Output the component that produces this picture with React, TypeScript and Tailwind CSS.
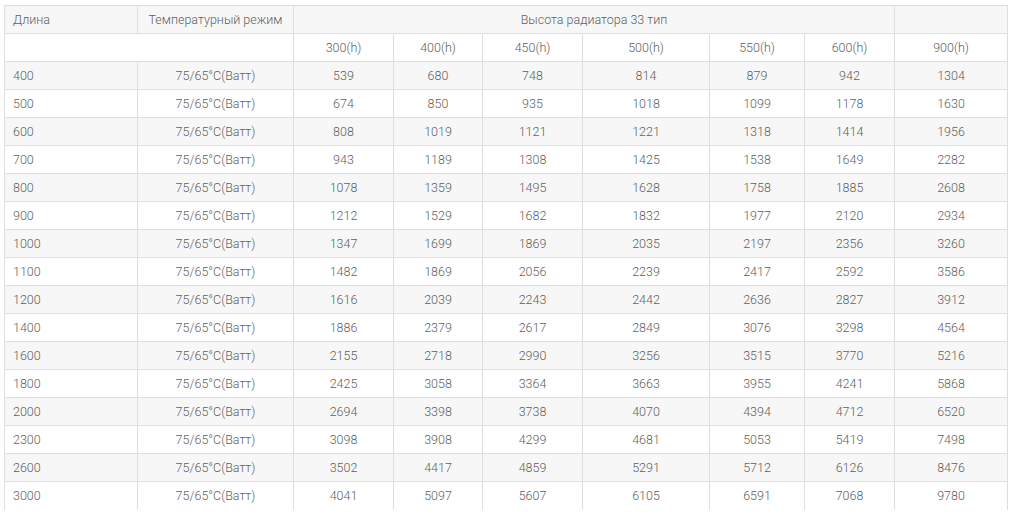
const heights = ["300(h)", "400(h)", "450(h)", "500(h)", "550(h)", "600(h)", "900(h)"];

const rows: [string, number[]][] = [
  ["400", [539, 680, 748, 814, 879, 942, 1304]],
  ["500", [674, 850, 935, 1018, 1099, 1178, 1630]],
  ["600", [808, 1019, 1121, 1221, 1318, 1414, 1956]],
  ["700", [943, 1189, 1308, 1425, 1538, 1649, 2282]],
  ["800", [1078, 1359, 1495, 1628, 1758, 1885, 2608]],
  ["900", [1212, 1529, 1682, 1832, 1977, 2120, 2934]],
  ["1000", [1347, 1699, 1869, 2035, 2197, 2356, 3260]],
  ["1100", [1482, 1869, 2056, 2239, 2417, 2592, 3586]],
  ["1200", [1616, 2039, 2243, 2442, 2636, 2827, 3912]],
  ["1400", [1886, 2379, 2617, 2849, 3076, 3298, 4564]],
  ["1600", [2155, 2718, 2990, 3256, 3515, 3770, 5216]],
  ["1800", [2425, 3058, 3364, 3663, 3955, 4241, 5868]],
  ["2000", [2694, 3398, 3738, 4070, 4394, 4712, 6520]],
  ["2300", [3098, 3908, 4299, 4681, 5053, 5419, 7498]],
  ["2600", [3502, 4417, 4859, 5291, 5712, 6126, 8476]],
  ["3000", [4041, 5097, 5607, 6105, 6591, 7068, 9780]],
];

const cell = "h-[28px] border border-[#dedede] px-2 pt-[2px] pb-0 align-middle whitespace-nowrap";

export default function App() {
  return (
    <div className="min-h-screen bg-white pl-[4px] pt-[5px] font-['Roboto',sans-serif] text-[12.5px] font-light text-[#5f5f5f]">
      <table className="w-[1003px] table-fixed border-collapse">
        <colgroup>
          <col className="w-[133px]" />
          <col className="w-[156px]" />
          <col className="w-[100px]" />
          <col className="w-[89px]" />
          <col className="w-[100px]" />
          <col className="w-[127px]" />
          <col className="w-[95px]" />
          <col className="w-[90px]" />
          <col className="w-[113px]" />
        </colgroup>
        <thead>
          <tr className="bg-[#f7f7f7]">
            <th className={`${cell} text-left font-light`}>Длина</th>
            <th className={`${cell} text-center font-light`}>Температурный режим</th>
            <th colSpan={6} className={`${cell} text-center font-light`}>
              Высота радиатора 33 тип
            </th>
            <th className={cell}></th>
          </tr>
          <tr className="bg-white">
            <th colSpan={2} className={cell}></th>
            {heights.map((h) => (
              <th key={h} className={`${cell} text-center font-light`}>
                {h}
              </th>
            ))}
          </tr>
        </thead>
        <tbody>
          {rows.map(([len, vals], i) => {
            const last = i === rows.length - 1;
            const c = last ? `${cell} border-b-0` : cell;
            return (
              <tr key={len} className={i % 2 === 0 ? "bg-[#f7f7f7]" : "bg-white"}>
                <td className={`${c} text-left`}>{len}</td>
                <td className={`${c} text-center`}>75/65°C(Ватт)</td>
                {vals.map((v, j) => (
                  <td key={j} className={`${c} text-center`}>
                    {v}
                  </td>
                ))}
              </tr>
            );
          })}
        </tbody>
      </table>
    </div>
  );
}
